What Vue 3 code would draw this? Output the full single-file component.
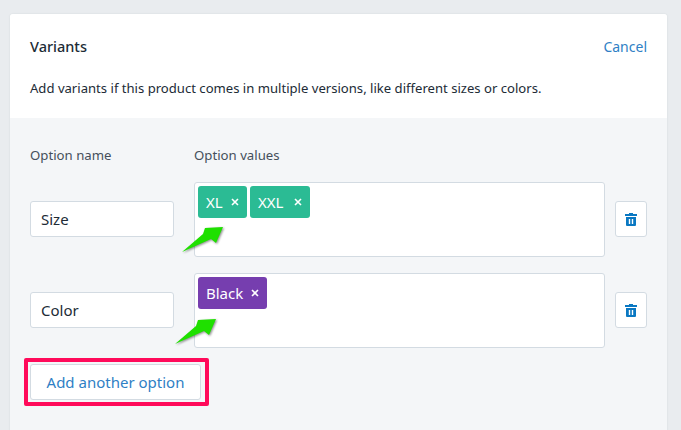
<script setup>
const options = [
  {
    name: "Size",
    tags: [{ label: "XL", width: 49 }, { label: "XXL", width: 60 }],
    color: "#2bbb94",
    arrowLeft: -15,
    arrowTop: 41
  },
  {
    name: "Color",
    tags: [{ label: "Black", width: 69 }],
    color: "#763eaf",
    arrowLeft: -22,
    arrowTop: 42
  }
];
</script>

<template>
  <div class="page">
    <section class="card">
      <header class="head">
        <div class="title-row">
          <h2 class="title">Variants</h2>
          <a class="link">Cancel</a>
        </div>
        <p class="desc">Add variants if this product comes in multiple versions, like different sizes or colors.</p>
      </header>

      <div class="body">
        <div class="labels">
          <span class="label name-col">Option name</span>
          <span class="label">Option values</span>
        </div>

        <div v-for="opt in options" :key="opt.name" class="row">
          <div class="input name-col">{{ opt.name }}</div>
          <div class="values">
            <span
              v-for="tag in opt.tags"
              :key="tag.label"
              class="tag"
              :style="{ background: opt.color, width: tag.width + 'px' }"
            >
              {{ tag.label }}
              <svg viewBox="0 0 8 8" width="8" height="8">
                <path d="M1 1l6 6M7 1L1 7" stroke="#fff" stroke-width="1.600" fill="none" />
              </svg>
            </span>
            <svg
              class="arrow"
              viewBox="0 0 46 30"
              width="46"
              height="30"
              :style="{ left: opt.arrowLeft + 'px', top: opt.arrowTop + 'px' }"
            >
              <path d="M2 28 L23 10 L25 4 L43 3 L36 19 L31 15 Z" fill="#1fe000" />
            </svg>
          </div>
          <button class="trash">
            <svg viewBox="0 0 12 13" width="12" height="13">
              <path
                fill="#0a78c2"
                fill-rule="evenodd"
                d="M4 0h4v1h4v2H0V1h4zM1 4h10v8a1 1 0 0 1-1 1H2a1 1 0 0 1-1-1zm2.800 2v5h1.400V6zm3 0v5h1.400V6z"
              />
            </svg>
          </button>
        </div>

        <div class="add-wrap">
          <button class="add">Add another option</button>
          <span class="highlight"></span>
        </div>
      </div>
    </section>
  </div>
</template>

<style>
html, body {
  margin: 0;
  background: #e9ecef;
}
</style>

<style scoped>
.page {
  width: 681px;
  height: 430px;
  overflow: hidden;
  padding: 14px 14px 0 10px;
  box-sizing: border-box;
  font-family: "Noto Sans", "Open Sans", sans-serif;
}

.card {
  background: #f4f6f8;
  border-radius: 3px;
  box-shadow: 0 0 2px rgba(60, 70, 90, 0.12);
  height: 430px;
  overflow: hidden;
}

.head {
  background: #fff;
  height: 104px;
  padding: 0 20px;
  box-sizing: border-box;
}

.title-row {
  display: flex;
  justify-content: space-between;
  align-items: center;
  padding-top: 22px;
  height: 20px;
}

.title {
  margin: 0;
  font-size: 14.500px;
  font-weight: 500;
  color: #212b36;
}

.link {
  font-size: 14px;
  color: #2f7fc5;
}

.desc {
  margin: 22px 0 0;
  font-size: 13.100px;
  line-height: 20px;
  color: #212b36;
}

.body {
  padding: 27px 20px 0;
}

.labels {
  display: flex;
  gap: 20px;
  height: 37px;
}

.label {
  font-size: 13.200px;
  line-height: 20px;
  color: #454f5b;
}

.name-col {
  width: 144px;
  flex: none;
}

.row {
  display: flex;
  align-items: flex-start;
  gap: 20px;
  margin-bottom: 16px;
}

.input {
  box-sizing: border-box;
  height: 36px;
  margin-top: 19px;
  line-height: 34px;
  padding: 0 10px;
  background: #fff;
  border: 1px solid #d3dbe2;
  border-radius: 3px;
  font-size: 15px;
  color: #212b36;
}

.values {
  position: relative;
  box-sizing: border-box;
  width: 411px;
  height: 75px;
  padding: 3px;
  display: flex;
  align-items: flex-start;
  gap: 3px;
  background: #fff;
  border: 1px solid #d3dbe2;
  border-radius: 3px;
}

.tag {
  box-sizing: border-box;
  display: inline-flex;
  align-items: center;
  justify-content: space-between;
  height: 32px;
  padding: 0 8px;
  border-radius: 3px;
  color: #fff;
  font-size: 15px;
}

.arrow {
  position: absolute;
  filter: drop-shadow(1px 1px 1px rgba(0, 0, 0, 0.45));
}

.trash {
  box-sizing: border-box;
  width: 32px;
  height: 36px;
  margin-top: 19px;
  margin-left: -10px;
  padding: 0;
  display: flex;
  align-items: center;
  justify-content: center;
  background: #fff;
  border: 1px solid #d3dbe2;
  border-radius: 3px;
}

.add-wrap {
  position: relative;
  width: 171px;
}

.add {
  box-sizing: border-box;
  width: 171px;
  height: 36px;
  padding: 0;
  background: #fff;
  border: 1px solid #d3dbe2;
  border-radius: 3px;
  font: inherit;
  font-size: 15px;
  color: #2f7fc5;
}

.highlight {
  position: absolute;
  left: -6px;
  top: -6px;
  width: 185px;
  height: 48px;
  box-sizing: border-box;
  border: 4px solid #ff0a5a;
  border-radius: 2px;
}
</style>
